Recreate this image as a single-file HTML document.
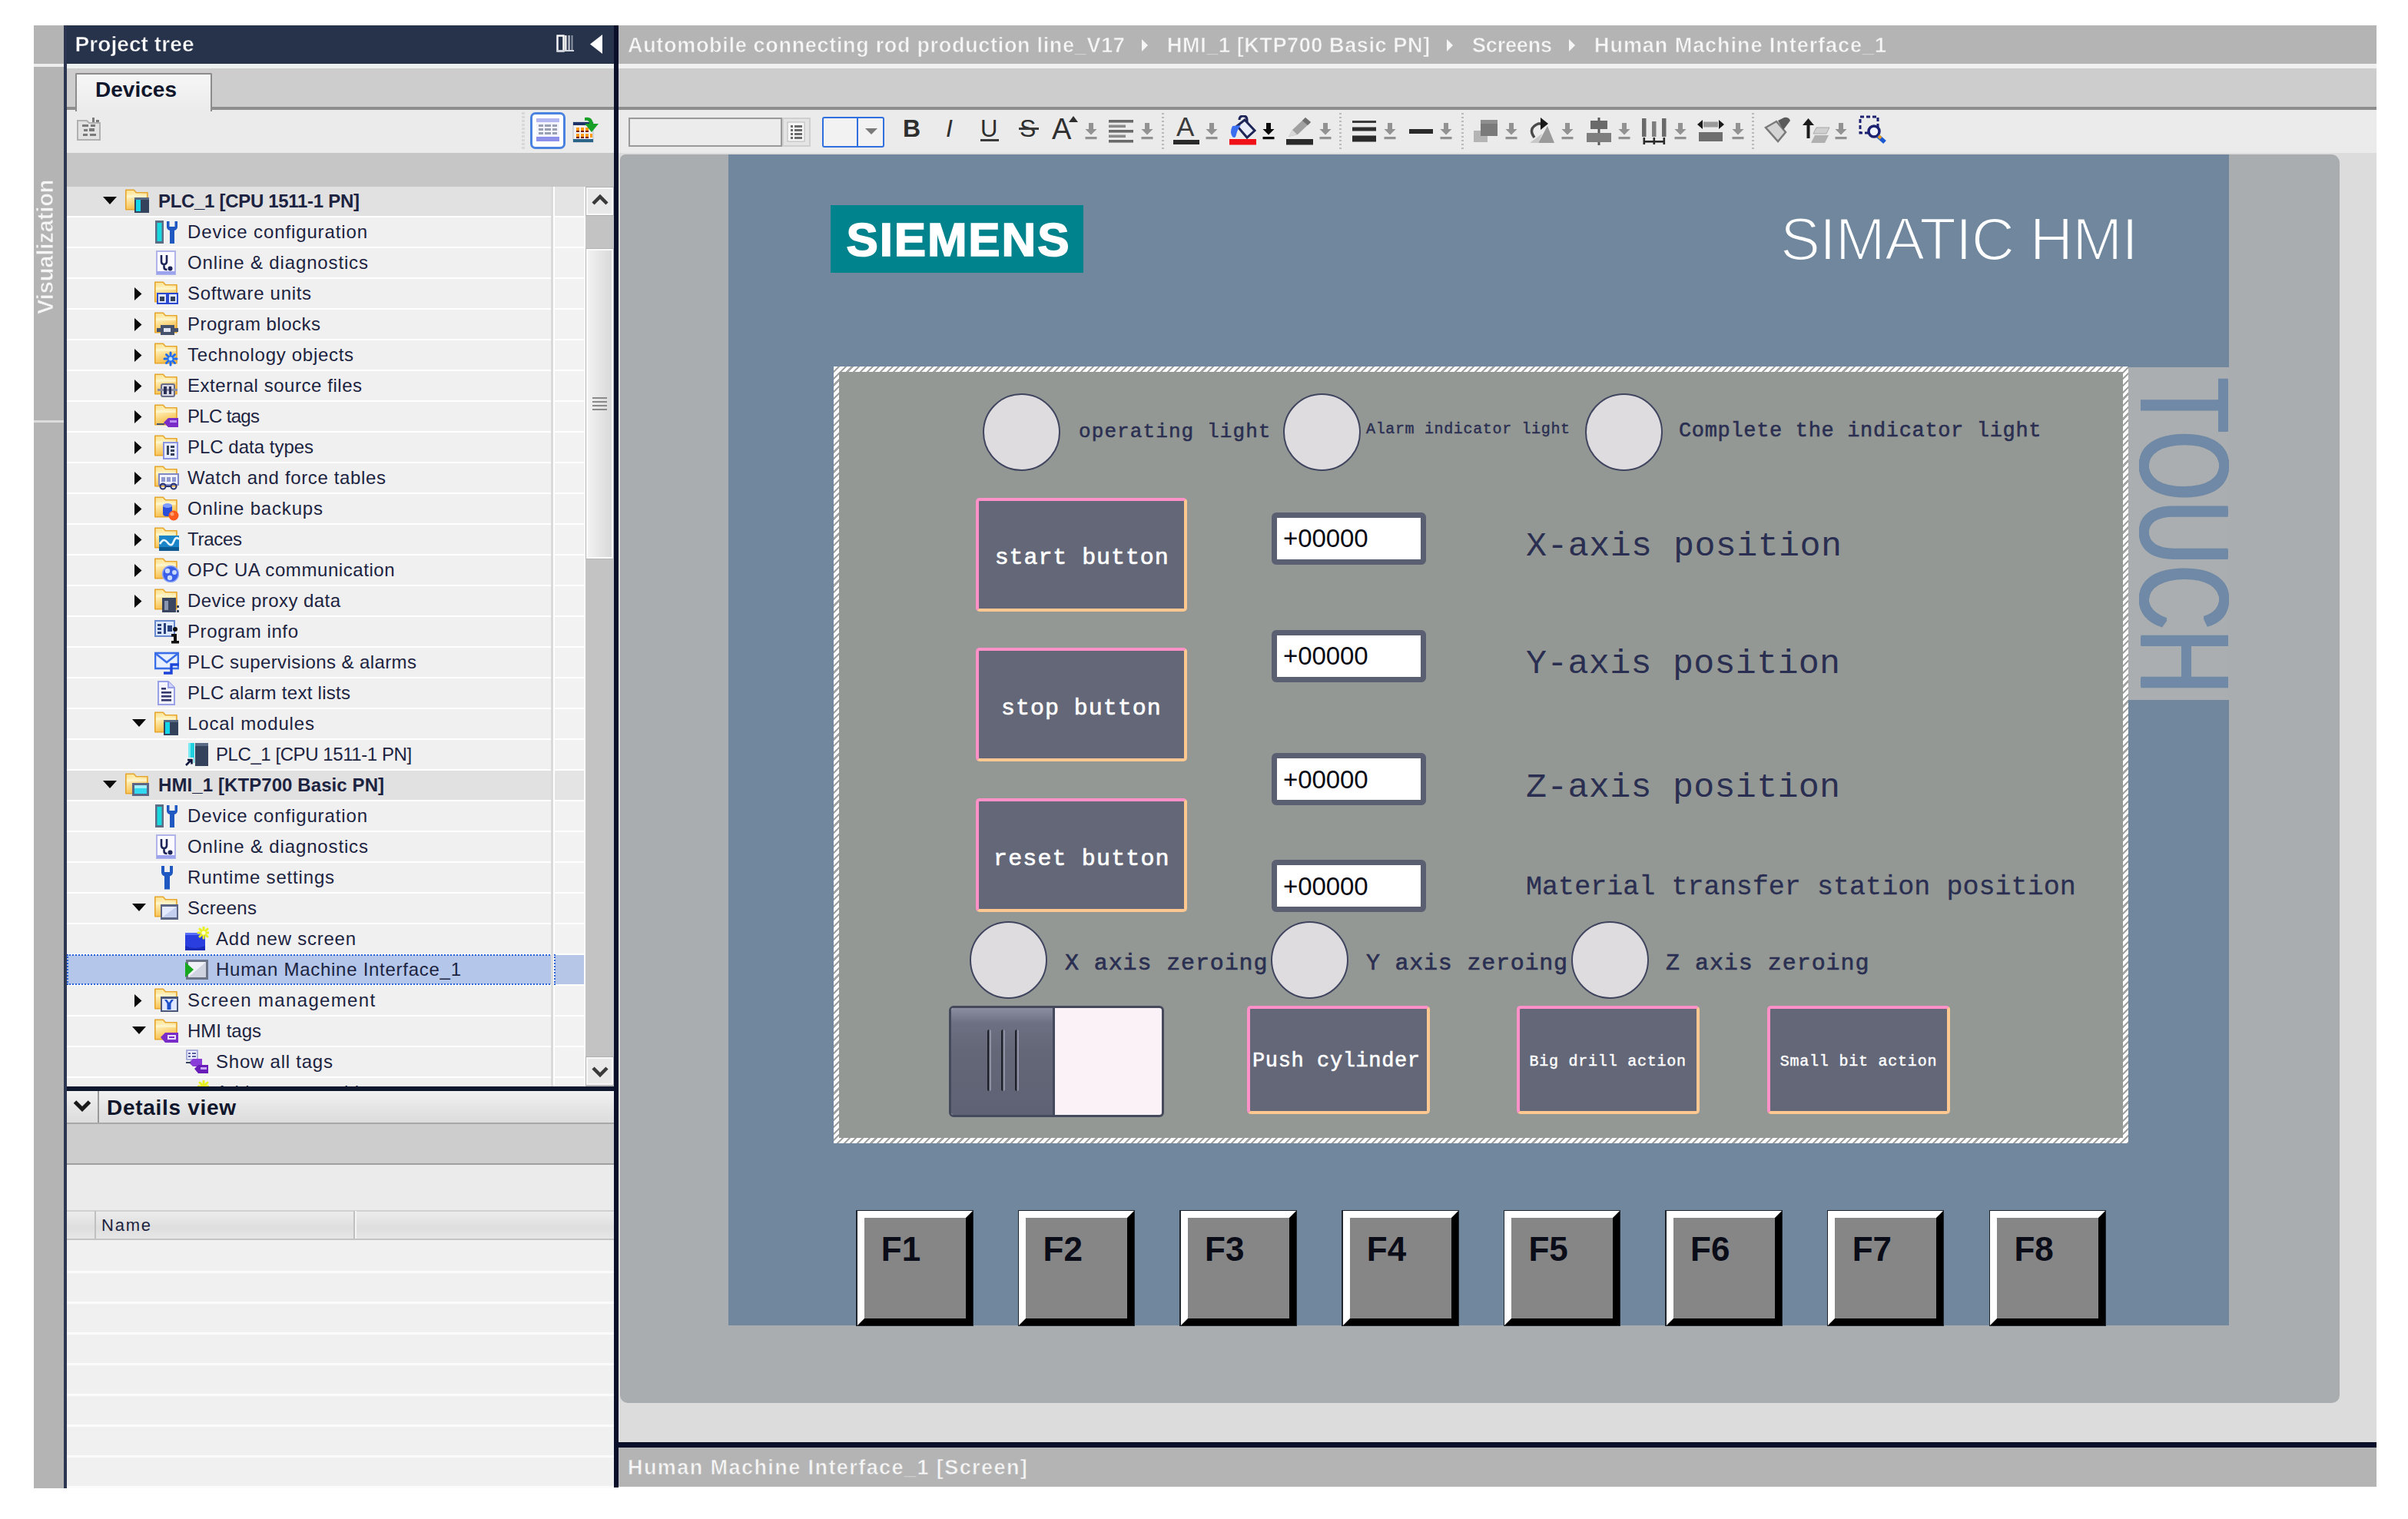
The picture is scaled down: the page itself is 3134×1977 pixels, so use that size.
<!DOCTYPE html>
<html lang="en"><head><meta charset="utf-8"><title>Human Machine Interface_1</title><style>
html,body{margin:0;padding:0}
body{width:3134px;height:1977px;background:#fff;position:relative;overflow:hidden;font-family:"Liberation Sans",sans-serif}
div{position:absolute;box-sizing:border-box}
.t{white-space:pre}
</style></head>
<body>
<svg width="0" height="0" style="position:absolute"><defs><linearGradient id="fg" x1="0" y1="0" x2="0.350" y2="1"><stop offset="0" stop-color="#fce08a"/><stop offset="0.350" stop-color="#fff0b8"/><stop offset="1" stop-color="#f7bd48"/></linearGradient></defs></svg>
<div id="app" style="left:0;top:0;width:3134px;height:1977px;filter:blur(0.55px)">
<div style="left:44px;top:33px;width:40px;height:1903.5px;background:#b4b4b4;"></div>
<div style="left:44px;top:83px;width:40px;height:4px;background:#ededed;"></div>
<div style="left:44px;top:547px;width:40px;height:3px;background:#dcdcdc;"></div>
<div style="left:83px;top:33px;width:4px;height:1903.5px;background:#2c3651;"></div>
<div class="t" style="left:45px;top:408.500px;height:29px;transform-origin:0 0;transform:rotate(-90deg);font:bold 29px/29px 'Liberation Sans', sans-serif;color:#f6f6f6;letter-spacing:-0.100px;-webkit-text-stroke:0.600px #b4b4b4">Visualization</div>
<div style="left:87px;top:33px;width:718px;height:50px;background:#27324b;"></div>
<div class="t" style="left:97.5px;top:44.3px;font: bold 28px/28px 'Liberation Sans', sans-serif;color:#ffffff;letter-spacing:0.08px;-webkit-text-stroke:0.500px #27324b;">Project tree</div>
<svg style="position:absolute;left:724px;top:44px;" width="26" height="26" viewBox="0 0 26 26"><rect x="1.5" y="2.5" width="8" height="20" fill="none" stroke="#fff" stroke-width="2.4"/><rect x="11" y="2" width="2.6" height="21" fill="#e8e8e8"/><rect x="15.5" y="2" width="2.2" height="21" fill="#c8ccd4"/><rect x="19.5" y="2" width="2" height="21" fill="#9098a8"/><rect x="1" y="21" width="22" height="2" fill="#d0d4dc"/></svg>
<svg style="position:absolute;left:766px;top:43px;" width="20" height="30" viewBox="0 0 20 30"><path d="M18 2 L2 14.5 L18 27z" fill="#fff"/></svg>
<div style="left:87px;top:83px;width:712px;height:6px;background:#eef1f1;"></div>
<div style="left:87px;top:89px;width:712px;height:50px;background:#cdcdcd;"></div>
<div style="left:87px;top:139px;width:712px;height:4px;background:#8e8e8e;"></div>
<div style="left:87px;top:143px;width:712px;height:56px;background:#ebebeb;"></div>
<div style="left:98px;top:95px;width:178px;height:50px;background:linear-gradient(#f6f6f6,#ebebeb);border:2.500px solid #8c8c8c;border-bottom:none;border-radius:2px 2px 0 0"></div>
<div class="t" style="left:124.0px;top:103.3px;font: bold 28px/28px 'Liberation Sans', sans-serif;color:#10162c;letter-spacing:0.02px;">Devices</div>
<svg style="position:absolute;left:99px;top:151px;" width="36" height="36" viewBox="0 0 36 36"><path d="M2 6 h12 l3 3 h14 v22 h-29z" fill="#e2e2e2" stroke="#b0b0b0" stroke-width="2"/><g fill="#7a7a7a"><rect x="8" y="11" width="8" height="3"/><rect x="19" y="11" width="6" height="3"/><rect x="10" y="17" width="5" height="3"/><rect x="17" y="16" width="7" height="4"/><rect x="9" y="23" width="6" height="3"/><rect x="18" y="23" width="8" height="3"/><rect x="21" y="2" width="3" height="6"/><rect x="26" y="5" width="4" height="3"/></g></svg>
<div style="left:679px;top:146px;width:4px;height:50px;background:repeating-linear-gradient(#d8d8d8 0 3px,#ebebeb 3px 5px);"></div>
<div style="left:690px;top:146px;width:46px;height:48px;background:#ffffff;border:3px solid #4a82e0;border-radius:7px"></div>
<svg style="position:absolute;left:697px;top:153px;" width="32" height="32" viewBox="0 0 32 32"><rect x="1" y="1" width="30" height="30" fill="#f4f4ff"/><rect x="1" y="1" width="30" height="5" fill="#b4b8f0"/><rect x="1" y="25" width="30" height="6" fill="#8c90e8"/><g fill="#9aa0b4"><rect x="4" y="9" width="6" height="3"/><rect x="12" y="9" width="8" height="3"/><rect x="22" y="9" width="6" height="3"/><rect x="4" y="14" width="6" height="3"/><rect x="12" y="14" width="8" height="3"/><rect x="22" y="14" width="6" height="3"/><rect x="4" y="19" width="6" height="3"/><rect x="12" y="19" width="8" height="3"/><rect x="22" y="19" width="6" height="3"/></g></svg>
<svg style="position:absolute;left:745px;top:150px;" width="38" height="38" viewBox="0 0 38 38"><rect x="1" y="9" width="26" height="26" fill="#f0f0f0" stroke="#b8c0c8"/><rect x="1" y="9" width="26" height="4" fill="#1c3468"/><rect x="1" y="31" width="26" height="4" fill="#2a6488"/><g fill="#ff9a10"><rect x="5" y="16" width="4" height="5"/><rect x="11" y="16" width="4" height="5"/><rect x="17" y="16" width="4" height="5"/><rect x="5" y="24" width="4" height="5"/><rect x="11" y="24" width="4" height="5"/><rect x="17" y="24" width="4" height="5"/><rect x="23" y="24" width="3" height="5"/></g><g fill="#7a1010"><rect x="5" y="20" width="4" height="2"/><rect x="11" y="20" width="4" height="2"/><rect x="17" y="20" width="4" height="2"/><rect x="5" y="28" width="4" height="2"/><rect x="11" y="28" width="4" height="2"/><rect x="17" y="28" width="4" height="2"/></g><path d="M16 3 q10 -2 11 8 h7 l-9 11 l-9 -11 h6 q0 -5 -6 -4z" fill="#18a028"/></svg>
<div style="left:87px;top:199px;width:712px;height:44px;background:#c6c6c6;"></div>
<div style="left:87px;top:243px;width:712px;height:1171px;background:#ffffff;overflow:hidden"><div style="left:0px;top:0px;width:630px;height:38px;background:#e1e1e1;"></div><div style="left:635px;top:0px;width:38px;height:38px;background:#e4e4e4;"></div><svg style="position:absolute;left:47px;top:13px;" width="18" height="10" viewBox="0 0 18 10"><path d="M0 0 h18 l-9 10z" fill="#0a0a0a"/></svg><svg style="position:absolute;left:76px;top:3px;" width="32" height="32" viewBox="0 0 32 32"><path d="M0.800 1.300 h10.500 l3 3.500 h14.700 v22 h-28.200z" fill="url(#fg)" stroke="#e6a52c" stroke-width="1.600" stroke-linejoin="round"/><path d="M2 8 h25.800 v3 h-25.800z" fill="#fff6cf" opacity="0.8"/><rect x="12" y="11" width="19" height="20" fill="#34425c"/><rect x="12" y="11" width="19" height="3" fill="#586882"/><rect x="14" y="14" width="6" height="15" fill="#14d6ea"/></svg><div class="t" style="left:119.0px;top:7.2px;font: bold 24px/24px 'Liberation Sans', sans-serif;color:#1c2340;letter-spacing:-0.31px;">PLC_1 [CPU 1511-1 PN]</div><div style="left:0px;top:40px;width:630px;height:38px;background:#f0f0f0;"></div><div style="left:635px;top:40px;width:38px;height:38px;background:#f2f2f2;"></div><svg style="position:absolute;left:114px;top:43px;" width="32" height="32" viewBox="0 0 32 32"><rect x="1" y="1" width="11" height="30" fill="#5c6c84"/><rect x="3.5" y="4" width="6" height="24" fill="#18d8e0"/><path d="M16 2 v7 q0 4 4 5 v17 h6 v-17 q4 -1 4 -5 v-7 h-3.500 v7 h-7 v-7z" fill="#1e58c0"/></svg><div class="t" style="left:157.0px;top:47.2px;font: normal 24px/24px 'Liberation Sans', sans-serif;color:#1c2340;letter-spacing:0.87px;">Device configuration</div><div style="left:0px;top:80px;width:630px;height:38px;background:#f0f0f0;"></div><div style="left:635px;top:80px;width:38px;height:38px;background:#f2f2f2;"></div><svg style="position:absolute;left:114px;top:83px;" width="32" height="32" viewBox="0 0 32 32"><rect x="3" y="1" width="24" height="30" fill="#fbfbff" stroke="#b0b4e8" stroke-width="2"/><rect x="3" y="27" width="24" height="4" fill="#9ca4f0"/><path d="M9 6 v8 q0 4 3.5 4 q3.500 0 3.500 -4 v-8 M12.500 18 v4 q0 3 4 3" fill="none" stroke="#1c2458" stroke-width="2.6"/><circle cx="20.500" cy="23.500" r="3" fill="#1c2458"/></svg><div class="t" style="left:157.0px;top:87.2px;font: normal 24px/24px 'Liberation Sans', sans-serif;color:#1c2340;letter-spacing:0.85px;">Online &amp; diagnostics</div><div style="left:0px;top:120px;width:630px;height:38px;background:#f0f0f0;"></div><div style="left:635px;top:120px;width:38px;height:38px;background:#f2f2f2;"></div><svg style="position:absolute;left:88px;top:130.5px;" width="10" height="17" viewBox="0 0 10 17"><path d="M0 0 v17 l9.500 -8.500z" fill="#0a0a0a"/></svg><svg style="position:absolute;left:114px;top:123px;" width="32" height="32" viewBox="0 0 32 32"><path d="M0.800 1.300 h10.500 l3 3.500 h14.700 v22 h-28.200z" fill="url(#fg)" stroke="#e6a52c" stroke-width="1.600" stroke-linejoin="round"/><path d="M2 8 h25.800 v3 h-25.800z" fill="#fff6cf" opacity="0.8"/><rect x="4" y="16" width="12" height="13" fill="#dfe6ff" stroke="#2a48d0" stroke-width="2"/><rect x="18" y="16" width="12" height="13" fill="#dfe6ff" stroke="#2a48d0" stroke-width="2"/><rect x="7" y="20" width="6" height="6" fill="#34425c"/><rect x="21" y="20" width="6" height="6" fill="#34425c"/></svg><div class="t" style="left:157.0px;top:127.2px;font: normal 24px/24px 'Liberation Sans', sans-serif;color:#1c2340;letter-spacing:0.69px;">Software units</div><div style="left:0px;top:160px;width:630px;height:38px;background:#f0f0f0;"></div><div style="left:635px;top:160px;width:38px;height:38px;background:#f2f2f2;"></div><svg style="position:absolute;left:88px;top:170.5px;" width="10" height="17" viewBox="0 0 10 17"><path d="M0 0 v17 l9.500 -8.500z" fill="#0a0a0a"/></svg><svg style="position:absolute;left:114px;top:163px;" width="32" height="32" viewBox="0 0 32 32"><path d="M0.800 1.300 h10.500 l3 3.500 h14.700 v22 h-28.200z" fill="url(#fg)" stroke="#e6a52c" stroke-width="1.600" stroke-linejoin="round"/><path d="M2 8 h25.800 v3 h-25.800z" fill="#fff6cf" opacity="0.8"/><path d="M8 17 h18 v4 h5 v5 h-5 v4 h-18 v-4 h-5 v-5 h5z" fill="#46526c"/><rect x="12" y="21" width="9" height="5" fill="#dfe4f0"/></svg><div class="t" style="left:157.0px;top:167.2px;font: normal 24px/24px 'Liberation Sans', sans-serif;color:#1c2340;letter-spacing:0.48px;">Program blocks</div><div style="left:0px;top:200px;width:630px;height:38px;background:#f0f0f0;"></div><div style="left:635px;top:200px;width:38px;height:38px;background:#f2f2f2;"></div><svg style="position:absolute;left:88px;top:210.5px;" width="10" height="17" viewBox="0 0 10 17"><path d="M0 0 v17 l9.500 -8.500z" fill="#0a0a0a"/></svg><svg style="position:absolute;left:114px;top:203px;" width="32" height="32" viewBox="0 0 32 32"><path d="M0.800 1.300 h10.500 l3 3.500 h14.700 v22 h-28.200z" fill="url(#fg)" stroke="#e6a52c" stroke-width="1.600" stroke-linejoin="round"/><path d="M2 8 h25.800 v3 h-25.800z" fill="#fff6cf" opacity="0.8"/><g stroke="#1e6cf0" stroke-width="3" stroke-linecap="round"><path d="M21 13 v16"/><path d="M13 21 h16"/><path d="M15.5 15.5 l11 11"/><path d="M26.500 15.5 l-11 11"/></g><circle cx="21" cy="21" r="2.5" fill="#bfe0ff"/></svg><div class="t" style="left:157.0px;top:207.2px;font: normal 24px/24px 'Liberation Sans', sans-serif;color:#1c2340;letter-spacing:0.70px;">Technology objects</div><div style="left:0px;top:240px;width:630px;height:38px;background:#f0f0f0;"></div><div style="left:635px;top:240px;width:38px;height:38px;background:#f2f2f2;"></div><svg style="position:absolute;left:88px;top:250.5px;" width="10" height="17" viewBox="0 0 10 17"><path d="M0 0 v17 l9.500 -8.500z" fill="#0a0a0a"/></svg><svg style="position:absolute;left:114px;top:243px;" width="32" height="32" viewBox="0 0 32 32"><path d="M0.800 1.300 h10.500 l3 3.500 h14.700 v22 h-28.200z" fill="url(#fg)" stroke="#e6a52c" stroke-width="1.600" stroke-linejoin="round"/><path d="M2 8 h25.800 v3 h-25.800z" fill="#fff6cf" opacity="0.8"/><rect x="9" y="14" width="17" height="16" rx="2" fill="#d8d8e4" stroke="#6a6e88" stroke-width="2"/><rect x="4" y="20" width="26" height="3" fill="#8a8ea0"/><rect x="12" y="17" width="4" height="10" fill="#2a3058"/><rect x="19" y="17" width="3" height="10" fill="#2a3058"/></svg><div class="t" style="left:157.0px;top:247.2px;font: normal 24px/24px 'Liberation Sans', sans-serif;color:#1c2340;letter-spacing:0.55px;">External source files</div><div style="left:0px;top:280px;width:630px;height:38px;background:#f0f0f0;"></div><div style="left:635px;top:280px;width:38px;height:38px;background:#f2f2f2;"></div><svg style="position:absolute;left:88px;top:290.5px;" width="10" height="17" viewBox="0 0 10 17"><path d="M0 0 v17 l9.500 -8.500z" fill="#0a0a0a"/></svg><svg style="position:absolute;left:114px;top:283px;" width="32" height="32" viewBox="0 0 32 32"><path d="M0.800 1.300 h10.500 l3 3.500 h14.700 v22 h-28.200z" fill="url(#fg)" stroke="#e6a52c" stroke-width="1.600" stroke-linejoin="round"/><path d="M2 8 h25.800 v3 h-25.800z" fill="#fff6cf" opacity="0.8"/><path d="M12 24 l6 -6 h13 v12 h-13z" fill="#7a2cc8"/><path d="M20 21 h9 v3 h-9z" fill="#b88cf0"/><path d="M3 25 h10 v2 h-10z" fill="#46526c"/></svg><div class="t" style="left:157.0px;top:287.2px;font: normal 24px/24px 'Liberation Sans', sans-serif;color:#1c2340;letter-spacing:-0.67px;">PLC tags</div><div style="left:0px;top:320px;width:630px;height:38px;background:#f0f0f0;"></div><div style="left:635px;top:320px;width:38px;height:38px;background:#f2f2f2;"></div><svg style="position:absolute;left:88px;top:330.5px;" width="10" height="17" viewBox="0 0 10 17"><path d="M0 0 v17 l9.500 -8.500z" fill="#0a0a0a"/></svg><svg style="position:absolute;left:114px;top:323px;" width="32" height="32" viewBox="0 0 32 32"><path d="M0.800 1.300 h10.500 l3 3.500 h14.700 v22 h-28.200z" fill="url(#fg)" stroke="#e6a52c" stroke-width="1.600" stroke-linejoin="round"/><path d="M2 8 h25.800 v3 h-25.800z" fill="#fff6cf" opacity="0.8"/><rect x="12" y="10" width="18" height="21" fill="#e8ecff" stroke="#8a94e0" stroke-width="2"/><g fill="#34425c"><rect x="16" y="14" width="3" height="12"/><rect x="21" y="14" width="5" height="3"/><rect x="21" y="19" width="5" height="3"/><rect x="21" y="24" width="5" height="3"/></g></svg><div class="t" style="left:157.0px;top:327.2px;font: normal 24px/24px 'Liberation Sans', sans-serif;color:#1c2340;">PLC data types</div><div style="left:0px;top:360px;width:630px;height:38px;background:#f0f0f0;"></div><div style="left:635px;top:360px;width:38px;height:38px;background:#f2f2f2;"></div><svg style="position:absolute;left:88px;top:370.5px;" width="10" height="17" viewBox="0 0 10 17"><path d="M0 0 v17 l9.500 -8.500z" fill="#0a0a0a"/></svg><svg style="position:absolute;left:114px;top:363px;" width="32" height="32" viewBox="0 0 32 32"><path d="M0.800 1.300 h10.500 l3 3.500 h14.700 v22 h-28.200z" fill="url(#fg)" stroke="#e6a52c" stroke-width="1.600" stroke-linejoin="round"/><path d="M2 8 h25.800 v3 h-25.800z" fill="#fff6cf" opacity="0.8"/><rect x="6" y="11" width="25" height="14" fill="#f0f2ff" stroke="#8088c8" stroke-width="2"/><g fill="#9098d0"><rect x="9" y="15" width="5" height="6"/><rect x="16" y="15" width="5" height="6"/><rect x="23" y="15" width="5" height="6"/></g><circle cx="11" cy="27" r="3.5" fill="none" stroke="#2a3470" stroke-width="2"/><circle cx="25" cy="27" r="3.5" fill="none" stroke="#2a3470" stroke-width="2"/><path d="M14 27 h8" stroke="#2a3470" stroke-width="2"/></svg><div class="t" style="left:157.0px;top:367.2px;font: normal 24px/24px 'Liberation Sans', sans-serif;color:#1c2340;letter-spacing:0.64px;">Watch and force tables</div><div style="left:0px;top:400px;width:630px;height:38px;background:#f0f0f0;"></div><div style="left:635px;top:400px;width:38px;height:38px;background:#f2f2f2;"></div><svg style="position:absolute;left:88px;top:410.5px;" width="10" height="17" viewBox="0 0 10 17"><path d="M0 0 v17 l9.500 -8.500z" fill="#0a0a0a"/></svg><svg style="position:absolute;left:114px;top:403px;" width="32" height="32" viewBox="0 0 32 32"><path d="M0.800 1.300 h10.500 l3 3.500 h14.700 v22 h-28.200z" fill="url(#fg)" stroke="#e6a52c" stroke-width="1.600" stroke-linejoin="round"/><path d="M2 8 h25.800 v3 h-25.800z" fill="#fff6cf" opacity="0.8"/><rect x="11" y="10" width="12" height="16" rx="4" fill="#2a4ed8"/><ellipse cx="17" cy="12" rx="6" ry="3" fill="#7c9cff"/><circle cx="25" cy="25" r="6.5" fill="#ff5a1e"/><circle cx="23" cy="23" r="2.5" fill="#ffa070"/></svg><div class="t" style="left:157.0px;top:407.2px;font: normal 24px/24px 'Liberation Sans', sans-serif;color:#1c2340;letter-spacing:0.81px;">Online backups</div><div style="left:0px;top:440px;width:630px;height:38px;background:#f0f0f0;"></div><div style="left:635px;top:440px;width:38px;height:38px;background:#f2f2f2;"></div><svg style="position:absolute;left:88px;top:450.5px;" width="10" height="17" viewBox="0 0 10 17"><path d="M0 0 v17 l9.500 -8.500z" fill="#0a0a0a"/></svg><svg style="position:absolute;left:114px;top:443px;" width="32" height="32" viewBox="0 0 32 32"><path d="M0.800 1.300 h10.500 l3 3.500 h14.700 v22 h-28.200z" fill="url(#fg)" stroke="#e6a52c" stroke-width="1.600" stroke-linejoin="round"/><path d="M2 8 h25.800 v3 h-25.800z" fill="#fff6cf" opacity="0.8"/><rect x="6" y="11" width="26" height="20" fill="#1a84c8"/><rect x="6" y="26" width="26" height="5" fill="#0c5a94"/><path d="M7 22 q5 -9 10 -2 t8 -1 t7 -3" fill="none" stroke="#e8f6ff" stroke-width="2.6"/></svg><div class="t" style="left:157.0px;top:447.2px;font: normal 24px/24px 'Liberation Sans', sans-serif;color:#1c2340;letter-spacing:-0.29px;">Traces</div><div style="left:0px;top:480px;width:630px;height:38px;background:#f0f0f0;"></div><div style="left:635px;top:480px;width:38px;height:38px;background:#f2f2f2;"></div><svg style="position:absolute;left:88px;top:490.5px;" width="10" height="17" viewBox="0 0 10 17"><path d="M0 0 v17 l9.500 -8.500z" fill="#0a0a0a"/></svg><svg style="position:absolute;left:114px;top:483px;" width="32" height="32" viewBox="0 0 32 32"><path d="M0.800 1.300 h10.500 l3 3.500 h14.700 v22 h-28.200z" fill="url(#fg)" stroke="#e6a52c" stroke-width="1.600" stroke-linejoin="round"/><path d="M2 8 h25.800 v3 h-25.800z" fill="#fff6cf" opacity="0.8"/><circle cx="21" cy="21" r="10.5" fill="#3a5ee8"/><circle cx="17" cy="17" r="3.2" fill="#c8d8ff"/><circle cx="26" cy="19" r="3" fill="#c8d8ff"/><circle cx="20" cy="26" r="3.2" fill="#c8d8ff"/><circle cx="21" cy="21" r="10.5" fill="none" stroke="#8ca4f8" stroke-width="1.5"/></svg><div class="t" style="left:157.0px;top:487.2px;font: normal 24px/24px 'Liberation Sans', sans-serif;color:#1c2340;letter-spacing:0.57px;">OPC UA communication</div><div style="left:0px;top:520px;width:630px;height:38px;background:#f0f0f0;"></div><div style="left:635px;top:520px;width:38px;height:38px;background:#f2f2f2;"></div><svg style="position:absolute;left:88px;top:530.5px;" width="10" height="17" viewBox="0 0 10 17"><path d="M0 0 v17 l9.500 -8.500z" fill="#0a0a0a"/></svg><svg style="position:absolute;left:114px;top:523px;" width="32" height="32" viewBox="0 0 32 32"><path d="M0.800 1.300 h10.500 l3 3.500 h14.700 v22 h-28.200z" fill="url(#fg)" stroke="#e6a52c" stroke-width="1.600" stroke-linejoin="round"/><path d="M2 8 h25.800 v3 h-25.800z" fill="#fff6cf" opacity="0.8"/><rect x="10" y="12" width="18" height="19" fill="#3a4660"/><g fill="#f4f0c0"><rect x="12" y="8" width="3" height="4"/><rect x="17" y="8" width="3" height="4"/><rect x="22" y="8" width="3" height="4"/></g><rect x="13" y="16" width="5" height="12" fill="#8a96b0"/><rect x="29" y="22" width="3" height="3" fill="#34425c"/><rect x="29" y="28" width="3" height="3" fill="#34425c"/></svg><div class="t" style="left:157.0px;top:527.2px;font: normal 24px/24px 'Liberation Sans', sans-serif;color:#1c2340;letter-spacing:0.43px;">Device proxy data</div><div style="left:0px;top:560px;width:630px;height:38px;background:#f0f0f0;"></div><div style="left:635px;top:560px;width:38px;height:38px;background:#f2f2f2;"></div><svg style="position:absolute;left:114px;top:563px;" width="32" height="32" viewBox="0 0 32 32"><rect x="1" y="2" width="25" height="20" fill="#dce8ff" stroke="#6a8ad0" stroke-width="2"/><g fill="#28407c"><rect x="4" y="6" width="5" height="3"/><rect x="4" y="11" width="5" height="3"/><rect x="4" y="16" width="5" height="3"/><rect x="12" y="5" width="3" height="14"/><rect x="17" y="8" width="6" height="8"/></g><circle cx="27" cy="13" r="3" fill="#101010"/><path d="M22 19 h7 v9 h3 v3.500 h-10 v-3.500 h3 v-5.500 h-3z" fill="#101010"/></svg><div class="t" style="left:157.0px;top:567.2px;font: normal 24px/24px 'Liberation Sans', sans-serif;color:#1c2340;letter-spacing:0.60px;">Program info</div><div style="left:0px;top:600px;width:630px;height:38px;background:#f0f0f0;"></div><div style="left:635px;top:600px;width:38px;height:38px;background:#f2f2f2;"></div><svg style="position:absolute;left:114px;top:603px;" width="32" height="32" viewBox="0 0 32 32"><rect x="1" y="4" width="30" height="20" fill="#e8f0ff" stroke="#3a6ee8" stroke-width="2.6"/><path d="M2 5 l14 11 l14 -11" fill="none" stroke="#3a6ee8" stroke-width="2.6"/><path d="M12 30 h10 v-11 h10" fill="none" stroke="#1c44d8" stroke-width="3.4"/></svg><div class="t" style="left:157.0px;top:607.2px;font: normal 24px/24px 'Liberation Sans', sans-serif;color:#1c2340;letter-spacing:0.41px;">PLC supervisions &amp; alarms</div><div style="left:0px;top:640px;width:630px;height:38px;background:#f0f0f0;"></div><div style="left:635px;top:640px;width:38px;height:38px;background:#f2f2f2;"></div><svg style="position:absolute;left:114px;top:643px;" width="32" height="32" viewBox="0 0 32 32"><path d="M5 1 h13 l8 8 v22 h-21z" fill="#f4f4ff" stroke="#9aa0e8" stroke-width="2"/><path d="M18 1 v8 h8" fill="#d0d4ff" stroke="#9aa0e8" stroke-width="2"/><g fill="#34386c"><rect x="9" y="9" width="6" height="2.600"/><rect x="9" y="14" width="13" height="2.600"/><rect x="9" y="19" width="13" height="2.600"/><rect x="9" y="24" width="13" height="2.600"/></g></svg><div class="t" style="left:157.0px;top:647.2px;font: normal 24px/24px 'Liberation Sans', sans-serif;color:#1c2340;letter-spacing:0.28px;">PLC alarm text lists</div><div style="left:0px;top:680px;width:630px;height:38px;background:#f0f0f0;"></div><div style="left:635px;top:680px;width:38px;height:38px;background:#f2f2f2;"></div><svg style="position:absolute;left:85px;top:693px;" width="18" height="10" viewBox="0 0 18 10"><path d="M0 0 h18 l-9 10z" fill="#0a0a0a"/></svg><svg style="position:absolute;left:114px;top:683px;" width="32" height="32" viewBox="0 0 32 32"><path d="M0.800 1.300 h10.500 l3 3.500 h14.700 v22 h-28.200z" fill="url(#fg)" stroke="#e6a52c" stroke-width="1.600" stroke-linejoin="round"/><path d="M2 8 h25.800 v3 h-25.800z" fill="#fff6cf" opacity="0.8"/><rect x="12" y="11" width="19" height="20" fill="#34425c"/><rect x="12" y="11" width="19" height="3" fill="#586882"/><rect x="14" y="14" width="6" height="15" fill="#14d6ea"/></svg><div class="t" style="left:157.0px;top:687.2px;font: normal 24px/24px 'Liberation Sans', sans-serif;color:#1c2340;letter-spacing:0.85px;">Local modules</div><div style="left:0px;top:720px;width:630px;height:38px;background:#f0f0f0;"></div><div style="left:635px;top:720px;width:38px;height:38px;background:#f2f2f2;"></div><svg style="position:absolute;left:153px;top:723px;" width="32" height="32" viewBox="0 0 32 32"><rect x="5" y="1" width="8" height="26" fill="#20d0e0"/><rect x="5" y="1" width="3" height="26" fill="#7aeaf2"/><rect x="14" y="1" width="17" height="30" fill="#34425c"/><rect x="14" y="1" width="17" height="4" fill="#5a6a86"/><rect x="0" y="20" width="12" height="12" fill="#f4f4f4"/><path d="M2 30 l6 -6 M4 23 h5.500 v5.500" fill="none" stroke="#101840" stroke-width="2.600"/></svg><div class="t" style="left:194.0px;top:727.2px;font: normal 24px/24px 'Liberation Sans', sans-serif;color:#1c2340;letter-spacing:-0.43px;">PLC_1 [CPU 1511-1 PN]</div><div style="left:0px;top:760px;width:630px;height:38px;background:#e1e1e1;"></div><div style="left:635px;top:760px;width:38px;height:38px;background:#e4e4e4;"></div><svg style="position:absolute;left:47px;top:773px;" width="18" height="10" viewBox="0 0 18 10"><path d="M0 0 h18 l-9 10z" fill="#0a0a0a"/></svg><svg style="position:absolute;left:76px;top:763px;" width="32" height="32" viewBox="0 0 32 32"><path d="M0.800 1.300 h10.500 l3 3.500 h14.700 v22 h-28.200z" fill="url(#fg)" stroke="#e6a52c" stroke-width="1.600" stroke-linejoin="round"/><path d="M2 8 h25.800 v3 h-25.800z" fill="#fff6cf" opacity="0.8"/><rect x="9" y="13" width="22" height="17" fill="#5a6684"/><rect x="12" y="16" width="16" height="11" fill="#30d8f0"/><rect x="12" y="16" width="16" height="4" fill="#a0f0ff"/></svg><div class="t" style="left:119.0px;top:767.2px;font: bold 24px/24px 'Liberation Sans', sans-serif;color:#1c2340;letter-spacing:0.09px;">HMI_1 [KTP700 Basic PN]</div><div style="left:0px;top:800px;width:630px;height:38px;background:#f0f0f0;"></div><div style="left:635px;top:800px;width:38px;height:38px;background:#f2f2f2;"></div><svg style="position:absolute;left:114px;top:803px;" width="32" height="32" viewBox="0 0 32 32"><rect x="1" y="1" width="11" height="30" fill="#5c6c84"/><rect x="3.5" y="4" width="6" height="24" fill="#18d8e0"/><path d="M16 2 v7 q0 4 4 5 v17 h6 v-17 q4 -1 4 -5 v-7 h-3.500 v7 h-7 v-7z" fill="#1e58c0"/></svg><div class="t" style="left:157.0px;top:807.2px;font: normal 24px/24px 'Liberation Sans', sans-serif;color:#1c2340;letter-spacing:0.87px;">Device configuration</div><div style="left:0px;top:840px;width:630px;height:38px;background:#f0f0f0;"></div><div style="left:635px;top:840px;width:38px;height:38px;background:#f2f2f2;"></div><svg style="position:absolute;left:114px;top:843px;" width="32" height="32" viewBox="0 0 32 32"><rect x="3" y="1" width="24" height="30" fill="#fbfbff" stroke="#b0b4e8" stroke-width="2"/><rect x="3" y="27" width="24" height="4" fill="#9ca4f0"/><path d="M9 6 v8 q0 4 3.5 4 q3.500 0 3.500 -4 v-8 M12.500 18 v4 q0 3 4 3" fill="none" stroke="#1c2458" stroke-width="2.6"/><circle cx="20.500" cy="23.500" r="3" fill="#1c2458"/></svg><div class="t" style="left:157.0px;top:847.2px;font: normal 24px/24px 'Liberation Sans', sans-serif;color:#1c2340;letter-spacing:0.85px;">Online &amp; diagnostics</div><div style="left:0px;top:880px;width:630px;height:38px;background:#f0f0f0;"></div><div style="left:635px;top:880px;width:38px;height:38px;background:#f2f2f2;"></div><svg style="position:absolute;left:114px;top:883px;" width="32" height="32" viewBox="0 0 32 32"><path d="M9 1 v8 q0 4 4 5.500 v17 h7 v-17 q4 -1.500 4 -5.500 v-8 h-4 v8 h-7 v-8z" fill="#1e58c0"/></svg><div class="t" style="left:157.0px;top:887.2px;font: normal 24px/24px 'Liberation Sans', sans-serif;color:#1c2340;letter-spacing:0.82px;">Runtime settings</div><div style="left:0px;top:920px;width:630px;height:38px;background:#f0f0f0;"></div><div style="left:635px;top:920px;width:38px;height:38px;background:#f2f2f2;"></div><svg style="position:absolute;left:85px;top:933px;" width="18" height="10" viewBox="0 0 18 10"><path d="M0 0 h18 l-9 10z" fill="#0a0a0a"/></svg><svg style="position:absolute;left:114px;top:923px;" width="32" height="32" viewBox="0 0 32 32"><path d="M0.800 1.300 h10.500 l3 3.500 h14.700 v22 h-28.200z" fill="url(#fg)" stroke="#e6a52c" stroke-width="1.600" stroke-linejoin="round"/><path d="M2 8 h25.800 v3 h-25.800z" fill="#fff6cf" opacity="0.8"/><rect x="8" y="11" width="23" height="20" fill="#5a6684"/><rect x="10" y="14" width="19" height="14" fill="#c4cff0"/><path d="M10 14 h19 l-19 14z" fill="#e4eaff"/></svg><div class="t" style="left:157.0px;top:927.2px;font: normal 24px/24px 'Liberation Sans', sans-serif;color:#1c2340;letter-spacing:0.33px;">Screens</div><div style="left:0px;top:960px;width:630px;height:38px;background:#f0f0f0;"></div><div style="left:635px;top:960px;width:38px;height:38px;background:#f2f2f2;"></div><svg style="position:absolute;left:153px;top:963px;" width="32" height="32" viewBox="0 0 32 32"><rect x="1" y="8" width="26" height="23" fill="#2a3ee0"/><path d="M1 31 h26 v-6 q-13 6 -26 0z" fill="#1a2ab8"/><rect x="1" y="8" width="26" height="3" fill="#5a70f8"/><g stroke="#e8f020" stroke-width="3" stroke-linecap="round"><path d="M25 1 v14"/><path d="M18 8 h14"/><path d="M20 3 l10 10"/><path d="M30 3 l-10 10"/></g><circle cx="25" cy="8" r="2.600" fill="#ffffd0"/></svg><div class="t" style="left:194.0px;top:967.2px;font: normal 24px/24px 'Liberation Sans', sans-serif;color:#1c2340;letter-spacing:0.76px;">Add new screen</div><div style="left:0px;top:1000px;width:630px;height:38px;background:#b4c6ea;"></div><div style="left:635px;top:1000px;width:38px;height:38px;background:#b6c6e6;"></div><div style="left:0px;top:999px;width:636px;height:40px;background:transparent;border:2.500px dotted #2a64d8"></div><svg style="position:absolute;left:153px;top:1003px;" width="32" height="32" viewBox="0 0 32 32"><rect x="2" y="3" width="29" height="26" fill="#6a7486"/><rect x="5" y="6" width="23" height="20" fill="#cfd4e0"/><path d="M5 6 h23 l-23 20z" fill="#f0f2f8"/><path d="M1 6 v20 l11 -10z" fill="#18a820"/></svg><div class="t" style="left:194.0px;top:1007.2px;font: normal 24px/24px 'Liberation Sans', sans-serif;color:#1c2340;letter-spacing:0.73px;">Human Machine Interface_1</div><div style="left:0px;top:1040px;width:630px;height:38px;background:#f0f0f0;"></div><div style="left:635px;top:1040px;width:38px;height:38px;background:#f2f2f2;"></div><svg style="position:absolute;left:88px;top:1050.5px;" width="10" height="17" viewBox="0 0 10 17"><path d="M0 0 v17 l9.500 -8.500z" fill="#0a0a0a"/></svg><svg style="position:absolute;left:114px;top:1043px;" width="32" height="32" viewBox="0 0 32 32"><path d="M0.800 1.300 h10.500 l3 3.500 h14.700 v22 h-28.200z" fill="url(#fg)" stroke="#e6a52c" stroke-width="1.600" stroke-linejoin="round"/><path d="M2 8 h25.800 v3 h-25.800z" fill="#fff6cf" opacity="0.8"/><rect x="8" y="11" width="23" height="20" fill="#4a5678"/><rect x="10" y="14" width="19" height="15" fill="#dfe6ff"/><path d="M13 15 l3.5 5 v8 h5 v-8 l3.5 -5 h-3 l-3 4 l-3 -4z" fill="#1c50c8"/></svg><div class="t" style="left:157.0px;top:1047.2px;font: normal 24px/24px 'Liberation Sans', sans-serif;color:#1c2340;letter-spacing:1.33px;">Screen management</div><div style="left:0px;top:1080px;width:630px;height:38px;background:#f0f0f0;"></div><div style="left:635px;top:1080px;width:38px;height:38px;background:#f2f2f2;"></div><svg style="position:absolute;left:85px;top:1093px;" width="18" height="10" viewBox="0 0 18 10"><path d="M0 0 h18 l-9 10z" fill="#0a0a0a"/></svg><svg style="position:absolute;left:114px;top:1083px;" width="32" height="32" viewBox="0 0 32 32"><path d="M0.800 1.300 h10.500 l3 3.500 h14.700 v22 h-28.200z" fill="url(#fg)" stroke="#e6a52c" stroke-width="1.600" stroke-linejoin="round"/><path d="M2 8 h25.800 v3 h-25.800z" fill="#fff6cf" opacity="0.8"/><path d="M8 24 l6 -6 h17 v13 h-17z" fill="#7a2cc8"/><rect x="17" y="21" width="11" height="6" fill="#e8dcff"/><rect x="19" y="23" width="7" height="2" fill="#7a2cc8"/></svg><div class="t" style="left:157.0px;top:1087.2px;font: normal 24px/24px 'Liberation Sans', sans-serif;color:#1c2340;">HMI tags</div><div style="left:0px;top:1120px;width:630px;height:38px;background:#f0f0f0;"></div><div style="left:635px;top:1120px;width:38px;height:38px;background:#f2f2f2;"></div><svg style="position:absolute;left:153px;top:1123px;" width="32" height="32" viewBox="0 0 32 32"><rect x="3" y="1" width="14" height="12" fill="#eef0ff" stroke="#9aa0d8" stroke-width="1.600"/><g fill="#5a60a0"><rect x="5" y="4" width="3" height="2"/><rect x="10" y="4" width="5" height="2"/><rect x="5" y="8" width="3" height="2"/><rect x="10" y="8" width="5" height="2"/></g><path d="M6 17 l5 -5 h12 v10 h-12z" fill="#8a3cd8"/><path d="M13 25 l5 -5 h13 v11 h-13z" fill="#6a1cb8"/><rect x="21" y="23" width="8" height="3" fill="#c8a8f8"/><path d="M2 16 h6 v2 h-6z" fill="#34425c"/></svg><div class="t" style="left:194.0px;top:1127.2px;font: normal 24px/24px 'Liberation Sans', sans-serif;color:#1c2340;letter-spacing:0.77px;">Show all tags</div><div style="left:0px;top:1160px;width:630px;height:38px;background:#f0f0f0;"></div><div style="left:635px;top:1160px;width:38px;height:38px;background:#f2f2f2;"></div><svg style="position:absolute;left:153px;top:1163px;" width="32" height="32" viewBox="0 0 32 32"><rect x="1" y="8" width="26" height="23" fill="#2a3ee0"/><g stroke="#e8f020" stroke-width="3" stroke-linecap="round"><path d="M25 1 v14"/><path d="M18 8 h14"/><path d="M20 3 l10 10"/><path d="M30 3 l-10 10"/></g></svg><div class="t" style="left:194.0px;top:1167.2px;font: normal 24px/24px 'Liberation Sans', sans-serif;color:#1c2340;letter-spacing:0.49px;">Add new tag table</div><div style="left:630px;top:0px;width:3px;height:1171px;background:#dadada;"></div></div>
<div style="left:762px;top:243px;width:37px;height:1171px;background:#c3c3c3;"></div>
<div style="left:763px;top:244px;width:35px;height:36px;background:#e9e9e9;border:2px solid #f8f8f8;outline:1px solid #b0b0b0"></div>
<svg style="position:absolute;left:770px;top:252px;" width="22" height="16" viewBox="0 0 22 16"><path d="M2 13 l9 -9 l9 9" fill="none" stroke="#3a3a3a" stroke-width="4.500"/></svg>
<div style="left:763px;top:324px;width:35px;height:403px;background:linear-gradient(90deg,#f2f2f2,#d9d9d9);border:2px solid #fafafa;outline:1px solid #b4b4b4"></div>
<div style="left:771px;top:517px;width:19px;height:18px;background:repeating-linear-gradient(#8a8a8a 0 2px,transparent 2px 5px);"></div>
<div style="left:763px;top:1376px;width:35px;height:36px;background:#e9e9e9;border:2px solid #f8f8f8;outline:1px solid #b0b0b0"></div>
<svg style="position:absolute;left:770px;top:1387px;" width="22" height="16" viewBox="0 0 22 16"><path d="M2 3 l9 9 l9 -9" fill="none" stroke="#3a3a3a" stroke-width="4.500"/></svg>
<div style="left:87px;top:1414px;width:712px;height:6px;background:#101830;"></div>
<div style="left:87px;top:1420px;width:712px;height:43px;background:linear-gradient(#f2f2f2,#e4e4e4 55%,#dcdcdc);"></div>
<div style="left:127px;top:1420px;width:2px;height:43px;background:#9a9a9a;"></div>
<div style="left:87px;top:1461px;width:712px;height:2px;background:#a8a8a8;"></div>
<svg style="position:absolute;left:95px;top:1431px;" width="24" height="18" viewBox="0 0 24 18"><path d="M2.500 3 l9.500 9.500 l9.500 -9.500" fill="none" stroke="#1a1a1a" stroke-width="5"/></svg>
<div class="t" style="left:139.0px;top:1428.3px;font: bold 28px/28px 'Liberation Sans', sans-serif;color:#10162c;letter-spacing:0.70px;">Details view</div>
<div style="left:87px;top:1463px;width:712px;height:52px;background:#cdcdcd;"></div>
<div style="left:87px;top:1514px;width:712px;height:2px;background:#a0a0a0;"></div>
<div style="left:87px;top:1516px;width:712px;height:60px;background:#ebebeb;"></div>
<div style="left:87px;top:1575px;width:712px;height:39px;background:linear-gradient(#ececec,#dedede 60%,#e6e6e6);border-top:2px solid #d0d0d0;border-bottom:2px solid #c4c4c4"></div>
<div style="left:123px;top:1576px;width:2px;height:36px;background:#c0c0c0;"></div>
<div style="left:460px;top:1576px;width:2px;height:36px;background:#c0c0c0;"></div>
<div style="left:462px;top:1576px;width:2px;height:36px;background:#f4f4f4;"></div>
<div class="t" style="left:132.0px;top:1584.4px;font: normal 22px/22px 'Liberation Sans', sans-serif;color:#1c2340;letter-spacing:1.77px;">Name</div>
<div style="left:87px;top:1614px;width:712px;height:322.5px;background:#f0f0f0;"></div>
<div style="left:87px;top:1654px;width:712px;height:3px;background:#fbfbfb;"></div>
<div style="left:87px;top:1694px;width:712px;height:3px;background:#fbfbfb;"></div>
<div style="left:87px;top:1734px;width:712px;height:3px;background:#fbfbfb;"></div>
<div style="left:87px;top:1774px;width:712px;height:3px;background:#fbfbfb;"></div>
<div style="left:87px;top:1814px;width:712px;height:3px;background:#fbfbfb;"></div>
<div style="left:87px;top:1854px;width:712px;height:3px;background:#fbfbfb;"></div>
<div style="left:87px;top:1894px;width:712px;height:3px;background:#fbfbfb;"></div>
<div style="left:87px;top:1934px;width:712px;height:3px;background:#fbfbfb;"></div>
<div style="left:799px;top:33px;width:6px;height:1903px;background:#0a0f2a;"></div>
<div style="left:805px;top:33px;width:2288px;height:50px;background:#b4b4b4;"></div>
<div style="left:805px;top:83px;width:2288px;height:6px;background:#f0f0f0;"></div>
<div style="left:805px;top:89px;width:2288px;height:50px;background:#cdcdcd;"></div>
<div style="left:805px;top:139px;width:2288px;height:4px;background:#8e8e8e;"></div>
<div style="left:805px;top:143px;width:2288px;height:56px;background:#ebebeb;"></div>
<div style="left:805px;top:199px;width:2288px;height:1678px;background:#dcdcdc;"></div>
<div style="left:805px;top:1877px;width:2288px;height:7px;background:#0a0f2a;"></div>
<div style="left:805px;top:1884px;width:2288px;height:51px;background:#b4b4b4;"></div>
<div class="t" style="left:817.0px;top:1896.6px;font: bold 27px/27px 'Liberation Sans', sans-serif;color:#f6f6f6;letter-spacing:1.43px;-webkit-text-stroke:0.6px #b4b4b4;">Human Machine Interface_1 [Screen]</div>
<div class="t" style="left:817.0px;top:46.1px;font: bold 27px/27px 'Liberation Sans', sans-serif;color:#f6f6f6;letter-spacing:0.69px;-webkit-text-stroke:0.6px #b4b4b4;">Automobile connecting rod production line_V17</div>
<div class="t" style="left:1519.0px;top:46.1px;font: bold 27px/27px 'Liberation Sans', sans-serif;color:#f6f6f6;letter-spacing:0.61px;-webkit-text-stroke:0.6px #b4b4b4;">HMI_1 [KTP700 Basic PN]</div>
<div class="t" style="left:1916.0px;top:46.1px;font: bold 27px/27px 'Liberation Sans', sans-serif;color:#f6f6f6;letter-spacing:-0.18px;-webkit-text-stroke:0.6px #b4b4b4;">Screens</div>
<div class="t" style="left:2075.0px;top:46.1px;font: bold 27px/27px 'Liberation Sans', sans-serif;color:#f6f6f6;letter-spacing:0.95px;-webkit-text-stroke:0.6px #b4b4b4;">Human Machine Interface_1</div>
<svg style="position:absolute;left:1485px;top:50px;" width="10" height="18" viewBox="0 0 10 18"><path d="M1 1 v16 l8 -8z" fill="#f6f6f6"/></svg>
<svg style="position:absolute;left:1882px;top:50px;" width="10" height="18" viewBox="0 0 10 18"><path d="M1 1 v16 l8 -8z" fill="#f6f6f6"/></svg>
<svg style="position:absolute;left:2041px;top:50px;" width="10" height="18" viewBox="0 0 10 18"><path d="M1 1 v16 l8 -8z" fill="#f6f6f6"/></svg>
<div style="left:818px;top:153px;width:200px;height:38px;background:#ececec;border:2.500px solid #9a9a9a"></div>
<div style="left:1018px;top:153px;width:37px;height:38px;background:#e4e4e4;border:2px solid #cfcfcf"></div>
<svg style="position:absolute;left:1024px;top:158px;" width="26" height="28" viewBox="0 0 26 28"><rect x="1" y="1" width="22" height="25" fill="#f6f6f6" stroke="#b8b8b8"/><g fill="#6a6a6a"><rect x="5" y="5" width="3" height="3"/><rect x="10" y="5" width="10" height="3"/><rect x="5" y="10" width="3" height="3"/><rect x="10" y="10" width="10" height="3"/><rect x="5" y="15" width="3" height="3"/><rect x="10" y="15" width="10" height="3"/><rect x="5" y="20" width="3" height="3"/><rect x="10" y="20" width="10" height="3"/></g></svg>
<div style="left:1070px;top:152px;width:81px;height:40px;background:#f2f2f2;border:2.500px solid #2f6fe0;border-radius:3px"></div>
<div style="left:1114.5px;top:152px;width:2.5px;height:40px;background:#2f6fe0;"></div>
<svg style="position:absolute;left:1125px;top:166px;" width="18" height="10" viewBox="0 0 18 10"><path d="M1 1 h16 l-8 8z" fill="#7a7a7a"/></svg>
<div class="t" style="left:1175.0px;top:150.9px;font: bold 32px/32px 'Liberation Sans', sans-serif;color:#2e2e2e;">B</div>
<div class="t" style="left:1231.0px;top:150.9px;font:italic normal 32px/32px 'Liberation Sans', sans-serif;color:#2e2e2e;">I</div>
<div class="t" style="left:1276.0px;top:151.8px;font: normal 31px/31px 'Liberation Sans', sans-serif;color:#2e2e2e;">U</div>
<div style="left:1276px;top:181px;width:24px;height:3px;background:#3a3a3a;"></div>
<div class="t" style="left:1327.0px;top:150.9px;font: normal 32px/32px 'Liberation Sans', sans-serif;color:#2e2e2e;">S</div>
<div style="left:1326px;top:166px;width:26px;height:2.5px;background:#3a3a3a;"></div>
<div class="t" style="left:1369.0px;top:148.8px;font: normal 38px/38px 'Liberation Sans', sans-serif;color:#2e2e2e;">A</div>
<svg style="position:absolute;left:1391px;top:151px;" width="12" height="8" viewBox="0 0 12 8"><path d="M0 8 h12 l-6 -8z" fill="#2e2e2e"/></svg>
<svg style="position:absolute;left:1411.5px;top:160px;" width="16" height="23" viewBox="0 0 16 23"><path d="M5 0 h6 v8 h4.500 l-7.500 7.500 l-7.500 -7.500 h4.500z" fill="#929292"/><rect x="0.500" y="18" width="15" height="3.200" fill="#929292"/></svg>
<svg style="position:absolute;left:1484.5px;top:160px;" width="16" height="23" viewBox="0 0 16 23"><path d="M5 0 h6 v8 h4.500 l-7.500 7.500 l-7.500 -7.500 h4.500z" fill="#929292"/><rect x="0.500" y="18" width="15" height="3.200" fill="#929292"/></svg>
<svg style="position:absolute;left:1568.5px;top:160px;" width="16" height="23" viewBox="0 0 16 23"><path d="M5 0 h6 v8 h4.500 l-7.500 7.500 l-7.500 -7.500 h4.500z" fill="#929292"/><rect x="0.500" y="18" width="15" height="3.200" fill="#929292"/></svg>
<svg style="position:absolute;left:1716.5px;top:160px;" width="16" height="23" viewBox="0 0 16 23"><path d="M5 0 h6 v8 h4.500 l-7.500 7.500 l-7.500 -7.500 h4.500z" fill="#929292"/><rect x="0.500" y="18" width="15" height="3.200" fill="#929292"/></svg>
<svg style="position:absolute;left:1800.5px;top:160px;" width="16" height="23" viewBox="0 0 16 23"><path d="M5 0 h6 v8 h4.500 l-7.500 7.500 l-7.500 -7.500 h4.500z" fill="#929292"/><rect x="0.500" y="18" width="15" height="3.200" fill="#929292"/></svg>
<svg style="position:absolute;left:1873.5px;top:160px;" width="16" height="23" viewBox="0 0 16 23"><path d="M5 0 h6 v8 h4.500 l-7.500 7.500 l-7.500 -7.500 h4.500z" fill="#929292"/><rect x="0.500" y="18" width="15" height="3.200" fill="#929292"/></svg>
<svg style="position:absolute;left:1958.5px;top:160px;" width="16" height="23" viewBox="0 0 16 23"><path d="M5 0 h6 v8 h4.500 l-7.500 7.500 l-7.500 -7.500 h4.500z" fill="#929292"/><rect x="0.500" y="18" width="15" height="3.200" fill="#929292"/></svg>
<svg style="position:absolute;left:2031.5px;top:160px;" width="16" height="23" viewBox="0 0 16 23"><path d="M5 0 h6 v8 h4.500 l-7.500 7.500 l-7.500 -7.500 h4.500z" fill="#929292"/><rect x="0.500" y="18" width="15" height="3.200" fill="#929292"/></svg>
<svg style="position:absolute;left:2105.5px;top:160px;" width="16" height="23" viewBox="0 0 16 23"><path d="M5 0 h6 v8 h4.500 l-7.500 7.500 l-7.500 -7.500 h4.500z" fill="#929292"/><rect x="0.500" y="18" width="15" height="3.200" fill="#929292"/></svg>
<svg style="position:absolute;left:2178.5px;top:160px;" width="16" height="23" viewBox="0 0 16 23"><path d="M5 0 h6 v8 h4.500 l-7.500 7.500 l-7.500 -7.500 h4.500z" fill="#929292"/><rect x="0.500" y="18" width="15" height="3.200" fill="#929292"/></svg>
<svg style="position:absolute;left:2253.5px;top:160px;" width="16" height="23" viewBox="0 0 16 23"><path d="M5 0 h6 v8 h4.500 l-7.500 7.500 l-7.500 -7.500 h4.500z" fill="#929292"/><rect x="0.500" y="18" width="15" height="3.200" fill="#929292"/></svg>
<svg style="position:absolute;left:2387.5px;top:160px;" width="16" height="23" viewBox="0 0 16 23"><path d="M5 0 h6 v8 h4.500 l-7.500 7.500 l-7.500 -7.500 h4.500z" fill="#929292"/><rect x="0.500" y="18" width="15" height="3.200" fill="#929292"/></svg>
<svg style="position:absolute;left:1642.5px;top:160px;" width="16" height="23" viewBox="0 0 16 23"><path d="M5 0 h6 v8 h4.500 l-7.500 7.500 l-7.500 -7.500 h4.500z" fill="#0a0a0a"/><rect x="0.500" y="18" width="15" height="3.200" fill="#0a0a0a"/></svg>
<div style="left:1512px;top:147px;width:2.5px;height:48px;background:repeating-linear-gradient(#bababa 0 2.500px,transparent 2.500px 5px);"></div>
<div style="left:1743px;top:147px;width:2.5px;height:48px;background:repeating-linear-gradient(#bababa 0 2.500px,transparent 2.500px 5px);"></div>
<div style="left:1902px;top:147px;width:2.5px;height:48px;background:repeating-linear-gradient(#bababa 0 2.500px,transparent 2.500px 5px);"></div>
<div style="left:2280px;top:147px;width:2.5px;height:48px;background:repeating-linear-gradient(#bababa 0 2.500px,transparent 2.500px 5px);"></div>
<svg style="position:absolute;left:1443px;top:156px;" width="33" height="30" viewBox="0 0 33 30"><rect x="0" y="0" width="32" height="3.600" fill="#6a6a6a"/><rect x="0" y="6.5" width="22" height="3.600" fill="#8a8a8a"/><rect x="0" y="13" width="32" height="3.600" fill="#6a6a6a"/><rect x="0" y="19.5" width="22" height="3.600" fill="#8a8a8a"/><rect x="0" y="26" width="32" height="3.600" fill="#6a6a6a"/></svg>
<div class="t" style="left:1531.0px;top:147.4px;font: normal 35px/35px 'Liberation Sans', sans-serif;color:#3a3a3a;">A</div>
<div style="left:1527px;top:181.5px;width:34px;height:6px;background:#2a2a2a;"></div>
<svg style="position:absolute;left:1600px;top:150px;" width="36" height="40" viewBox="0 0 36 40"><path d="M13 6 q0 -5 5 -5 q5 0 5 5 v6" fill="none" stroke="#1c2458" stroke-width="3"/><path d="M10 14 l10 -8 l13 14 l-10 9z" fill="#e8ecf8" stroke="#1c2458" stroke-width="3"/><path d="M4 14 q-4 8 0 14 q4 3 5 -3 q2 -8 6 -12z" fill="#3a6ef0"/><rect x="0" y="31" width="35" height="7.500" fill="#f01018"/></svg>
<svg style="position:absolute;left:1674px;top:150px;" width="36" height="40" viewBox="0 0 36 40"><path d="M3 28 l5 -9 l17 -16 l7 6 l-17 16z" fill="#a0a0a0"/><path d="M25 3 l7 6 l-4 4 l-7 -6z" fill="#6e6e6e"/><path d="M3 28 l5 -9 l6 6z" fill="#d8d8d8"/><rect x="0" y="31" width="35" height="7.500" fill="#2a2a2a"/></svg>
<svg style="position:absolute;left:1760px;top:156px;" width="32" height="30" viewBox="0 0 32 30"><rect x="0" y="1" width="31" height="3" fill="#3a3a3a"/><rect x="0" y="9.500" width="31" height="5" fill="#2e2e2e"/><rect x="0" y="20.500" width="31" height="8" fill="#2a2a2a"/></svg>
<div style="left:1834px;top:168px;width:31px;height:5.5px;background:#2a2a2a;"></div>
<svg style="position:absolute;left:1918px;top:156px;" width="32" height="30" viewBox="0 0 32 30"><rect x="0" y="14" width="18" height="15" fill="#b4b4b4"/><rect x="9" y="0" width="22" height="21" fill="#7a7a7a"/><rect x="9" y="0" width="22" height="5" fill="#8e8e8e"/></svg>
<svg style="position:absolute;left:1988px;top:152px;" width="36" height="34" viewBox="0 0 36 34"><path d="M14 34 h21 l-9 -22z" fill="#9a9a9a"/><path d="M3 34 h11 l5 -12z" fill="#c8c8c8"/><path d="M9 27 q-9 -12 5 -18 h5" fill="none" stroke="#4a4a4a" stroke-width="3.500"/><path d="M17 1 l10 8 l-10 8z" fill="#1a1a1a"/></svg>
<svg style="position:absolute;left:2065px;top:153px;" width="32" height="36" viewBox="0 0 32 36"><rect x="14.500" y="0" width="3" height="36" fill="#5a5a5a"/><rect x="5" y="4" width="22" height="11" fill="#6a6a6a"/><rect x="0" y="20" width="32" height="12" fill="#7e7e7e"/></svg>
<svg style="position:absolute;left:2136px;top:154px;" width="34" height="34" viewBox="0 0 34 34"><rect x="1" y="0" width="5.500" height="24" fill="#6a6a6a"/><rect x="14" y="4" width="5.500" height="20" fill="#7e7e7e"/><rect x="27" y="0" width="5.500" height="24" fill="#6a6a6a"/><rect x="3" y="29" width="28" height="2.600" fill="#2a2a2a"/><rect x="2.500" y="25" width="2.600" height="9" fill="#2a2a2a"/><rect x="15.500" y="25" width="2.600" height="9" fill="#2a2a2a"/><rect x="28.500" y="25" width="2.600" height="9" fill="#2a2a2a"/></svg>
<svg style="position:absolute;left:2209px;top:156px;" width="36" height="30" viewBox="0 0 36 30"><path d="M0 6 l7 -6 v12z" fill="#1a1a1a"/><path d="M35 6 l-7 -6 v12z" fill="#1a1a1a"/><rect x="8" y="2.500" width="19" height="7" fill="#9a9a9a"/><rect x="2" y="16" width="31" height="12" fill="#6e6e6e"/></svg>
<svg style="position:absolute;left:2296px;top:152px;" width="36" height="36" viewBox="0 0 36 36"><path d="M2 14 l14 -8 l12 14 l-10 12z" fill="#d4d4d4" stroke="#7a7a7a" stroke-width="2.500"/><path d="M18 5 l8 -4 q6 -1 8 4 l-9 12z" fill="#5a5a5a"/></svg>
<svg style="position:absolute;left:2346px;top:154px;" width="36" height="34" viewBox="0 0 36 34"><path d="M5.500 6 h4 v20 h-4z" fill="#1a1a1a"/><path d="M0 9 l7.500 -9 l7.500 9z" fill="#1a1a1a"/><path d="M18 12 h17 l-4 8 h-17z" fill="#d0d0d0" stroke="#a8a8a8"/><path d="M16 22 h18 l-5 10 h-18z" fill="#b0b0b0"/></svg>
<svg style="position:absolute;left:2419px;top:150px;" width="38" height="38" viewBox="0 0 38 38"><rect x="2" y="2" width="23" height="21" fill="none" stroke="#1c2070" stroke-width="3" stroke-dasharray="5 3"/><circle cx="20" cy="21" r="7" fill="#f0f4ff" stroke="#1c2070" stroke-width="3.500"/><path d="M25 27 l9 8" stroke="#1a58d0" stroke-width="5.500"/><path d="M26 27 l3 3" stroke="#f0a020" stroke-width="4"/></svg>
<div style="left:807px;top:201px;width:2238px;height:1625px;background:#a9adaf;border-radius:7px 11px 10px 10px"></div>
<div style="left:948px;top:201px;width:1953px;height:1524px;background:#70879d;"></div>
<div style="left:2769px;top:478px;width:132px;height:433px;background:#aaaeb0;"></div>
<div style="left:1081px;top:267px;width:329px;height:88px;background:#00838c;"></div>
<div class="t" style="left:1101.5px;top:281.0px;font: bold 62px/62px 'Liberation Sans', sans-serif;color:#ffffff;letter-spacing:1.82px;-webkit-text-stroke:1.600px #ffffff;">SIEMENS</div>
<div class="t" style="left:2317.0px;top:272.0px;font: normal 78px/78px 'Liberation Sans', sans-serif;color:#ffffff;letter-spacing:-0.92px;-webkit-text-stroke:2.2px #70879d;">SIMATIC HMI</div>
<div class="t" style="left:2925.500px;top:492px;transform-origin:0 0;transform:rotate(90deg) scale(0.70,1);font:166px/166px 'Liberation Sans', sans-serif;color:#6f89a6;text-shadow:2.500px 0 0 #6f89a6,-2.500px 0 0 #6f89a6,1.200px 0 0 #6f89a6,-1.200px 0 0 #6f89a6">TOUCH</div>
<div style="left:1084.5px;top:477px;width:1685px;height:1011px;background:repeating-linear-gradient(135deg,#ffffff 0 3.900px,#a2a5a3 3.900px 6.150px);"></div>
<div style="left:1092px;top:483.5px;width:1670.7px;height:997px;background:#949894;"></div>
<div style="left:1278.5px;top:512.0px;width:101px;height:101px;background:#dfdce0;border-radius:50%;border:2.500px solid #40455f"></div>
<div style="left:1669.5px;top:512.0px;width:101px;height:101px;background:#dfdce0;border-radius:50%;border:2.500px solid #40455f"></div>
<div style="left:2062.5px;top:512.0px;width:101px;height:101px;background:#dfdce0;border-radius:50%;border:2.500px solid #40455f"></div>
<div style="left:1262.0px;top:1198.5px;width:101px;height:101px;background:#dfdce0;border-radius:50%;border:2.500px solid #40455f"></div>
<div style="left:1653.5px;top:1198.5px;width:101px;height:101px;background:#dfdce0;border-radius:50%;border:2.500px solid #40455f"></div>
<div style="left:2045.0px;top:1198.5px;width:101px;height:101px;background:#dfdce0;border-radius:50%;border:2.500px solid #40455f"></div>
<div class="t" style="left:1404.0px;top:548.9px;font: normal 26px/26px 'Liberation Mono', monospace;color:#2a2f52;letter-spacing:1.10px;-webkit-text-stroke:0.55px #2a2f52;">operating light</div>
<div class="t" style="left:1778.0px;top:548.7px;font: normal 20px/20px 'Liberation Mono', monospace;color:#2a2f52;letter-spacing:0.65px;-webkit-text-stroke:0.42px #2a2f52;">Alarm indicator light</div>
<div class="t" style="left:2185.0px;top:548.1px;font: normal 27px/27px 'Liberation Mono', monospace;color:#2a2f52;letter-spacing:0.66px;-webkit-text-stroke:0.57px #2a2f52;">Complete the indicator light</div>
<div class="t" style="left:1386.0px;top:1239.0px;font: normal 30px/30px 'Liberation Mono', monospace;color:#2a2f52;letter-spacing:0.88px;-webkit-text-stroke:0.63px #2a2f52;">X axis zeroing</div>
<div class="t" style="left:1778.0px;top:1239.0px;font: normal 30px/30px 'Liberation Mono', monospace;color:#2a2f52;letter-spacing:0.77px;-webkit-text-stroke:0.63px #2a2f52;">Y axis zeroing</div>
<div class="t" style="left:2168.0px;top:1239.0px;font: normal 30px/30px 'Liberation Mono', monospace;color:#2a2f52;letter-spacing:0.96px;-webkit-text-stroke:0.63px #2a2f52;">Z axis zeroing</div>
<div style="left:1270px;top:648px;width:275px;height:148px;background:#636778;border-radius:5px;border:4px solid;border-color:#ff90c8 #ffc890 #ffc890 #ff90c8"></div>
<div style="left:1270px;top:843px;width:275px;height:148px;background:#636778;border-radius:5px;border:4px solid;border-color:#ff90c8 #ffc890 #ffc890 #ff90c8"></div>
<div style="left:1270px;top:1039px;width:275px;height:148px;background:#636778;border-radius:5px;border:4px solid;border-color:#ff90c8 #ffc890 #ffc890 #ff90c8"></div>
<div class="t" style="left:1294.7px;top:711.0px;font: normal 30px/30px 'Liberation Mono', monospace;color:#ffffff;letter-spacing:0.91px;-webkit-text-stroke:0.63px #ffffff;">start button</div>
<div class="t" style="left:1303.0px;top:906.6px;font: normal 30px/30px 'Liberation Mono', monospace;color:#ffffff;letter-spacing:0.96px;-webkit-text-stroke:0.63px #ffffff;">stop button</div>
<div class="t" style="left:1293.0px;top:1102.6px;font: normal 30px/30px 'Liberation Mono', monospace;color:#ffffff;letter-spacing:1.14px;-webkit-text-stroke:0.63px #ffffff;">reset button</div>
<div style="left:1622.5px;top:1309px;width:238px;height:141px;background:#636778;border-radius:5px;border:4px solid;border-color:#ff90c8 #ffc890 #ffc890 #ff90c8"></div>
<div style="left:1973.5px;top:1309px;width:238px;height:141px;background:#636778;border-radius:5px;border:4px solid;border-color:#ff90c8 #ffc890 #ffc890 #ff90c8"></div>
<div style="left:2300px;top:1309px;width:238px;height:141px;background:#636778;border-radius:5px;border:4px solid;border-color:#ff90c8 #ffc890 #ffc890 #ff90c8"></div>
<div class="t" style="left:1630.0px;top:1367.9px;font: normal 27px/27px 'Liberation Mono', monospace;color:#ffffff;letter-spacing:0.61px;-webkit-text-stroke:0.57px #ffffff;">Push cylinder</div>
<div class="t" style="left:1990.4px;top:1371.7px;font: normal 20px/20px 'Liberation Mono', monospace;color:#ffffff;letter-spacing:0.78px;-webkit-text-stroke:0.42px #ffffff;">Big drill action</div>
<div class="t" style="left:2316.7px;top:1371.7px;font: normal 20px/20px 'Liberation Mono', monospace;color:#ffffff;letter-spacing:0.78px;-webkit-text-stroke:0.42px #ffffff;">Small bit action</div>
<div style="left:1654.5px;top:666.5px;width:201px;height:68px;background:#ffffff;border:7px solid #5a6072;border-radius:6px"></div><div class="t" style="left:1670.0px;top:684.1px;font: normal 33px/33px 'Liberation Sans', sans-serif;color:#0a0a14;letter-spacing:-0.07px;">+00000</div>
<div style="left:1654.5px;top:819.5px;width:201px;height:68px;background:#ffffff;border:7px solid #5a6072;border-radius:6px"></div><div class="t" style="left:1670.0px;top:837.1px;font: normal 33px/33px 'Liberation Sans', sans-serif;color:#0a0a14;letter-spacing:-0.07px;">+00000</div>
<div style="left:1654.5px;top:980px;width:201px;height:68px;background:#ffffff;border:7px solid #5a6072;border-radius:6px"></div><div class="t" style="left:1670.0px;top:997.6px;font: normal 33px/33px 'Liberation Sans', sans-serif;color:#0a0a14;letter-spacing:-0.07px;">+00000</div>
<div style="left:1654.5px;top:1119px;width:201px;height:68px;background:#ffffff;border:7px solid #5a6072;border-radius:6px"></div><div class="t" style="left:1670.0px;top:1136.6px;font: normal 33px/33px 'Liberation Sans', sans-serif;color:#0a0a14;letter-spacing:-0.07px;">+00000</div>
<div class="t" style="left:1986.0px;top:688.5px;font: normal 45px/45px 'Liberation Mono', monospace;color:#2a2f52;letter-spacing:0.42px;">X-axis position</div>
<div class="t" style="left:1986.0px;top:841.5px;font: normal 45px/45px 'Liberation Mono', monospace;color:#2a2f52;letter-spacing:0.28px;">Y-axis position</div>
<div class="t" style="left:1986.0px;top:1002.5px;font: normal 45px/45px 'Liberation Mono', monospace;color:#2a2f52;letter-spacing:0.28px;">Z-axis position</div>
<div class="t" style="left:1986.0px;top:1138.2px;font: normal 35px/35px 'Liberation Mono', monospace;color:#2a2f52;letter-spacing:0.05px;-webkit-text-stroke:0.300px #2a2f52;">Material transfer station position</div>
<div style="left:1235px;top:1309px;width:280px;height:145px;background:#faf2f6;border:3px solid #444a5c;border-radius:6px"></div>
<div style="left:1238px;top:1312px;width:134px;height:139px;background:linear-gradient(#8a8ea0 0,#6c7082 14%,#636778 40%,#5e6274 100%);border-radius:3px 0 0 3px"></div>
<div style="left:1370px;top:1312px;width:3px;height:139px;background:#444a5c;"></div>
<div style="left:1285px;top:1340px;width:5px;height:80px;background:linear-gradient(90deg,#16181f 0 45%,#9296a8 55% 100%);border-radius:3px;opacity:.9"></div>
<div style="left:1303px;top:1340px;width:5px;height:80px;background:linear-gradient(90deg,#16181f 0 45%,#9296a8 55% 100%);border-radius:3px;opacity:.9"></div>
<div style="left:1321px;top:1340px;width:5px;height:80px;background:linear-gradient(90deg,#16181f 0 45%,#9296a8 55% 100%);border-radius:3px;opacity:.9"></div>
<div style="left:1114.0px;top:1574.500px;width:152.500px;height:151px;background:#20242c"></div>
<div style="left:1115.5px;top:1575.500px;width:150px;height:149px;background:#868686;border:9.500px solid;border-color:#ffffff #000000 #000000 #ffffff"></div>
<div class="t" style="left:1146.8px;top:1603.8px;font: bold 44px/44px 'Liberation Sans', sans-serif;color:#0a0c18;">F1</div>
<div style="left:1324.7px;top:1574.500px;width:152.500px;height:151px;background:#20242c"></div>
<div style="left:1326.2px;top:1575.500px;width:150px;height:149px;background:#868686;border:9.500px solid;border-color:#ffffff #000000 #000000 #ffffff"></div>
<div class="t" style="left:1357.5px;top:1603.8px;font: bold 44px/44px 'Liberation Sans', sans-serif;color:#0a0c18;">F2</div>
<div style="left:1535.3px;top:1574.500px;width:152.500px;height:151px;background:#20242c"></div>
<div style="left:1536.8px;top:1575.500px;width:150px;height:149px;background:#868686;border:9.500px solid;border-color:#ffffff #000000 #000000 #ffffff"></div>
<div class="t" style="left:1568.1px;top:1603.8px;font: bold 44px/44px 'Liberation Sans', sans-serif;color:#0a0c18;">F3</div>
<div style="left:1746.0px;top:1574.500px;width:152.500px;height:151px;background:#20242c"></div>
<div style="left:1747.5px;top:1575.500px;width:150px;height:149px;background:#868686;border:9.500px solid;border-color:#ffffff #000000 #000000 #ffffff"></div>
<div class="t" style="left:1778.8px;top:1603.8px;font: bold 44px/44px 'Liberation Sans', sans-serif;color:#0a0c18;">F4</div>
<div style="left:1956.6px;top:1574.500px;width:152.500px;height:151px;background:#20242c"></div>
<div style="left:1958.1px;top:1575.500px;width:150px;height:149px;background:#868686;border:9.500px solid;border-color:#ffffff #000000 #000000 #ffffff"></div>
<div class="t" style="left:1989.4px;top:1603.8px;font: bold 44px/44px 'Liberation Sans', sans-serif;color:#0a0c18;">F5</div>
<div style="left:2167.2px;top:1574.500px;width:152.500px;height:151px;background:#20242c"></div>
<div style="left:2168.8px;top:1575.500px;width:150px;height:149px;background:#868686;border:9.500px solid;border-color:#ffffff #000000 #000000 #ffffff"></div>
<div class="t" style="left:2200.1px;top:1603.8px;font: bold 44px/44px 'Liberation Sans', sans-serif;color:#0a0c18;">F6</div>
<div style="left:2377.9px;top:1574.500px;width:152.500px;height:151px;background:#20242c"></div>
<div style="left:2379.4px;top:1575.500px;width:150px;height:149px;background:#868686;border:9.500px solid;border-color:#ffffff #000000 #000000 #ffffff"></div>
<div class="t" style="left:2410.7px;top:1603.8px;font: bold 44px/44px 'Liberation Sans', sans-serif;color:#0a0c18;">F7</div>
<div style="left:2588.6px;top:1574.500px;width:152.500px;height:151px;background:#20242c"></div>
<div style="left:2590.1px;top:1575.500px;width:150px;height:149px;background:#868686;border:9.500px solid;border-color:#ffffff #000000 #000000 #ffffff"></div>
<div class="t" style="left:2621.4px;top:1603.8px;font: bold 44px/44px 'Liberation Sans', sans-serif;color:#0a0c18;">F8</div>
</div>
</body></html>
